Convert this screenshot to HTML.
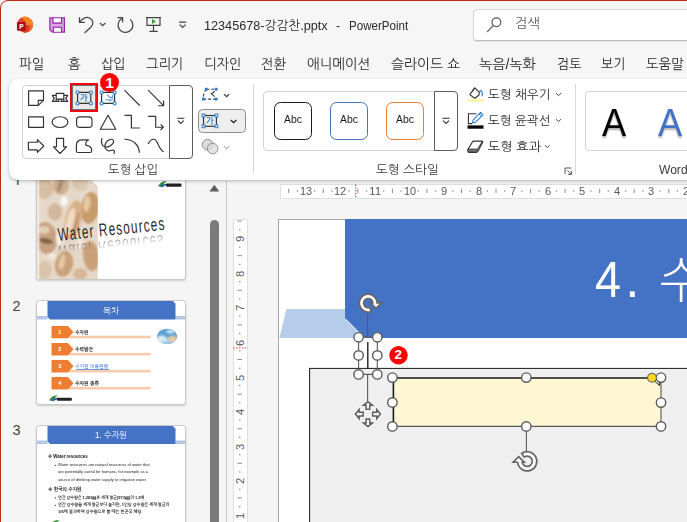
<!DOCTYPE html>
<html lang="ko"><head><meta charset="utf-8"><title>PowerPoint</title>
<style>
*{box-sizing:border-box;margin:0;padding:0}
html,body{width:687px;height:522px;overflow:hidden;background:#f0f0f0}
body{font-family:"Liberation Sans","NanumGothic","Noto Sans CJK KR",sans-serif;color:#222;position:relative}
#win{position:absolute;left:0;top:0;width:720px;height:560px;background:#f6f6f6;border:1px solid #c22a0c;border-radius:8px 0 0 0;overflow:hidden}
#app{position:absolute;left:-1px;top:-1px;width:687px;height:522px}
.t{position:absolute;white-space:nowrap;line-height:1;transform-origin:0 0;display:inline-block}
.tab{font-size:14px;color:#2b2b2b;top:57px}
.lbl{font-size:12.5px;color:#3a3a3a}
.cmd{font-size:12.5px;color:#2b2b2b}
svg{position:absolute;overflow:visible}
.b{position:absolute}
</style></head><body>
<div id="win"><div id="app">

<!-- ===== EDITOR AREA ===== -->
<div class="b" id="editor" style="left:228px;top:178px;width:460px;height:345px;background:#f5f5f5"></div>
<!-- rulers -->
<div class="b" style="left:279.5px;top:184.2px;width:420px;height:14.6px;background:#fff;border:1px solid #e0e0e0"></div>
<div class="b" style="left:232.8px;top:219.4px;width:15.2px;height:320px;background:#fff;border:1px solid #e0e0e0"></div>
<svg style="left:228px;top:178px" width="460" height="345" viewBox="228 178 460 345" fill="none">
<path d="M288.7 188.8 V193 M323.3 188.8 V193 M357.8 188.8 V193 M392.4 188.8 V193 M426.9 188.8 V193 M461.5 188.8 V193 M496.0 188.8 V193 M530.6 188.8 V193 M565.1 188.8 V193 M599.7 188.8 V193 M634.2 188.8 V193 M668.8 188.8 V193" stroke="#8a8a8a" stroke-width="1"/>
<g fill="#777"><rect x="296.8" y="190.4" width="1.2" height="1.2"/><rect x="314.0" y="190.4" width="1.2" height="1.2"/><rect x="331.3" y="190.4" width="1.2" height="1.2"/><rect x="348.6" y="190.4" width="1.2" height="1.2"/><rect x="365.9" y="190.4" width="1.2" height="1.2"/><rect x="383.1" y="190.4" width="1.2" height="1.2"/><rect x="400.4" y="190.4" width="1.2" height="1.2"/><rect x="417.7" y="190.4" width="1.2" height="1.2"/><rect x="435.0" y="190.4" width="1.2" height="1.2"/><rect x="452.2" y="190.4" width="1.2" height="1.2"/><rect x="469.5" y="190.4" width="1.2" height="1.2"/><rect x="486.8" y="190.4" width="1.2" height="1.2"/><rect x="504.1" y="190.4" width="1.2" height="1.2"/><rect x="521.3" y="190.4" width="1.2" height="1.2"/><rect x="538.6" y="190.4" width="1.2" height="1.2"/><rect x="555.9" y="190.4" width="1.2" height="1.2"/><rect x="573.2" y="190.4" width="1.2" height="1.2"/><rect x="590.4" y="190.4" width="1.2" height="1.2"/><rect x="607.7" y="190.4" width="1.2" height="1.2"/><rect x="625.0" y="190.4" width="1.2" height="1.2"/><rect x="642.3" y="190.4" width="1.2" height="1.2"/><rect x="659.5" y="190.4" width="1.2" height="1.2"/><rect x="676.8" y="190.4" width="1.2" height="1.2"/><rect x="694.1" y="190.4" width="1.2" height="1.2"/></g>
<path d="M355.7 184.6 V198.4" stroke="#e03a2c" stroke-width="1.1" stroke-dasharray="1.4 1.4"/>
<path d="M237.4 221.1 H241.8 M237.4 255.7 H241.8 M237.4 290.3 H241.8 M237.4 324.9 H241.8 M237.4 359.5 H241.8 M237.4 394.1 H241.8 M237.4 428.7 H241.8 M237.4 463.3 H241.8 M237.4 497.9 H241.8" stroke="#8a8a8a" stroke-width="1"/>
<g fill="#777"><rect x="239.2" y="229.2" width="1.2" height="1.2"/><rect x="239.2" y="246.5" width="1.2" height="1.2"/><rect x="239.2" y="263.8" width="1.2" height="1.2"/><rect x="239.2" y="281.0" width="1.2" height="1.2"/><rect x="239.2" y="298.4" width="1.2" height="1.2"/><rect x="239.2" y="315.6" width="1.2" height="1.2"/><rect x="239.2" y="333.0" width="1.2" height="1.2"/><rect x="239.2" y="350.2" width="1.2" height="1.2"/><rect x="239.2" y="367.6" width="1.2" height="1.2"/><rect x="239.2" y="384.8" width="1.2" height="1.2"/><rect x="239.2" y="402.1" width="1.2" height="1.2"/><rect x="239.2" y="419.4" width="1.2" height="1.2"/><rect x="239.2" y="436.8" width="1.2" height="1.2"/><rect x="239.2" y="454.0" width="1.2" height="1.2"/><rect x="239.2" y="471.4" width="1.2" height="1.2"/><rect x="239.2" y="488.6" width="1.2" height="1.2"/><rect x="239.2" y="506.0" width="1.2" height="1.2"/><rect x="239.2" y="523.2" width="1.2" height="1.2"/></g>
<path d="M233.4 348 H247.6" stroke="#e03a2c" stroke-width="1.1" stroke-dasharray="1.4 1.4"/>
</svg>
<span class="t" style="left:299.9px;top:186.2px;font-size:11.3px;color:#595959;transform:var(--pre,) scaleX(0.9699)">13</span>
<span class="t" style="left:334.4px;top:186.2px;font-size:11.3px;color:#595959;transform:var(--pre,) scaleX(0.9699)">12</span>
<span class="t" style="left:369.0px;top:186.2px;font-size:11.3px;color:#595959;transform:var(--pre,) scaleX(1.0397)">11</span>
<span class="t" style="left:403.5px;top:186.2px;font-size:11.3px;color:#595959;transform:var(--pre,) scaleX(0.9699)">10</span>
<span class="t" style="left:441.1px;top:186.2px;font-size:11.3px;color:#595959;transform:var(--pre,) scaleX(0.9846)">9</span>
<span class="t" style="left:475.6px;top:186.2px;font-size:11.3px;color:#595959;transform:var(--pre,) scaleX(0.9846)">8</span>
<span class="t" style="left:510.2px;top:186.2px;font-size:11.3px;color:#595959;transform:var(--pre,) scaleX(0.9846)">7</span>
<span class="t" style="left:544.7px;top:186.2px;font-size:11.3px;color:#595959;transform:var(--pre,) scaleX(0.9846)">6</span>
<span class="t" style="left:579.3px;top:186.2px;font-size:11.3px;color:#595959;transform:var(--pre,) scaleX(0.9846)">5</span>
<span class="t" style="left:613.9px;top:186.2px;font-size:11.3px;color:#595959;transform:var(--pre,) scaleX(0.9846)">4</span>
<span class="t" style="left:648.4px;top:186.2px;font-size:11.3px;color:#595959;transform:var(--pre,) scaleX(0.9846)">3</span>
<span class="t" style="left:682.9px;top:186.2px;font-size:11.3px;color:#595959;transform:var(--pre,) scaleX(0.9846)">2</span>
<span class="t" style="left:235.2px;top:242.2px;font-size:11.3px;color:#595959;transform:var(--pre,) scaleX(0.9846);--pre:rotate(-90deg)">9</span>
<span class="t" style="left:235.2px;top:276.8px;font-size:11.3px;color:#595959;transform:var(--pre,) scaleX(0.9846);--pre:rotate(-90deg)">8</span>
<span class="t" style="left:235.2px;top:311.4px;font-size:11.3px;color:#595959;transform:var(--pre,) scaleX(0.9846);--pre:rotate(-90deg)">7</span>
<span class="t" style="left:235.2px;top:346.0px;font-size:11.3px;color:#595959;transform:var(--pre,) scaleX(0.9846);--pre:rotate(-90deg)">6</span>
<span class="t" style="left:235.2px;top:380.6px;font-size:11.3px;color:#595959;transform:var(--pre,) scaleX(0.9846);--pre:rotate(-90deg)">5</span>
<span class="t" style="left:235.2px;top:415.2px;font-size:11.3px;color:#595959;transform:var(--pre,) scaleX(0.9846);--pre:rotate(-90deg)">4</span>
<span class="t" style="left:235.2px;top:449.8px;font-size:11.3px;color:#595959;transform:var(--pre,) scaleX(0.9846);--pre:rotate(-90deg)">3</span>
<span class="t" style="left:235.2px;top:484.4px;font-size:11.3px;color:#595959;transform:var(--pre,) scaleX(0.9846);--pre:rotate(-90deg)">2</span>
<span class="t" style="left:235.2px;top:519.0px;font-size:11.3px;color:#595959;transform:var(--pre,) scaleX(0.9846);--pre:rotate(-90deg)">1</span>
<!-- slide -->
<div class="b" style="left:278px;top:219px;width:420px;height:320px;background:#fff;border:1px solid #a8a8a8"></div>
<svg style="left:278px;top:219px" width="410" height="304" viewBox="278 219 410 304">
 <path d="M286.4 309 H346 V320 L364 338 H279.4 Z" fill="#b5cde8"/>
 <path d="M345 219 H690 V338 H365 L345 318 Z" fill="#4472c4"/>
 <rect x="309.6" y="368.4" width="400" height="170" fill="#efefef" stroke="#1a1a1a" stroke-width="1"/>
 <!-- yellow box -->
 <path d="M393.4 378 H655.5 L661 383.5 V426.4 H393.4 Z" fill="#fff7d4"/>
 <path d="M393.4 426.4 V378 H655.5" fill="none" stroke="#1a1a1a" stroke-width="1.6"/>
 <path d="M655.5 378 L661 383.5 V426.4 H393.4" fill="none" stroke="#5a5a5a" stroke-width="1.1"/>
 <!-- small selection -->
 <path d="M358.6 337.3 H377.3 V374.4 H358.6 Z" fill="none" stroke="#5a5a5a" stroke-width="1.1"/>
 <path d="M367.6 313 V338" stroke="#5a5a5a" stroke-width="1.1"/>
 <path d="M367.8 342 V368.4" stroke="#111" stroke-width="1.3"/>
 <path d="M367.6 374.5 V401" stroke="#5a5a5a" stroke-width="1.1"/>
 <path d="M526.4 431 V451.4" stroke="#5a5a5a" stroke-width="1.1"/>
 <g fill="#fff" stroke="#5a5a5a" stroke-width="1.4">
  <circle cx="358.6" cy="337.3" r="4.7"/><circle cx="377.3" cy="337.3" r="4.7"/>
  <circle cx="358.6" cy="355.4" r="4.7"/><circle cx="377.3" cy="355.4" r="4.7"/>
  <circle cx="358.6" cy="374.4" r="4.7"/><circle cx="377.3" cy="374.4" r="4.7"/>
  <circle cx="392.4" cy="377.6" r="4.7"/><circle cx="526.3" cy="377.6" r="4.7"/><circle cx="661" cy="377.6" r="4.7"/>
  <circle cx="392.4" cy="402.4" r="4.7"/><circle cx="661" cy="402.6" r="4.7"/>
  <circle cx="392.4" cy="426.4" r="4.7"/><circle cx="526.3" cy="426.4" r="4.7"/><circle cx="661" cy="426.4" r="4.7"/>
 </g>
 <circle cx="652" cy="377.8" r="4.4" fill="#ffd91a" stroke="#6a6a6a" stroke-width="1.2"/>
 <path d="M655 381.4 L659.6 385.6 L659.2 382.4" fill="none" stroke="#222" stroke-width="1"/>
 <!-- rotate top -->
 <g transform="translate(368.2 303.1)">
  <path d="M3.04 8.36 A8.9 8.9 0 1 1 8.9 -0.3 L13.4 -0.3 L7.85 5.2 L2.3 -0.3 L4.6 -0.3 A4.6 4.6 0 1 0 1.57 4.32 Z" fill="#fff" stroke="#666" stroke-width="1.7" stroke-linejoin="miter"/>
 </g>
 <!-- rotate bottom -->
 <g transform="translate(527.2 461.3)">
  <path d="M-5.5 -7.86 A9.6 9.6 0 1 1 -9.55 0.95 L-14 0.95 L-8.5 -4.6 L-3 0.95 L-5.01 0.95 A5.1 5.1 0 1 0 -2.92 -4.18 Z" fill="#fff" stroke="#666" stroke-width="1.7" stroke-linejoin="miter"/>
 </g>
 <!-- move cursor -->
 <g transform="translate(367.9 414.1)" fill="#fafafa" stroke="#5c5c5c" stroke-width="1.5" stroke-linejoin="miter">
  <path d="M0 -12.5 L4.5 -8.8 H1.8 V-4.8 H-1.8 V-8.8 H-4.5 Z"/>
  <path d="M0 12.5 L4.5 8.8 H1.8 V4.8 H-1.8 V8.8 H-4.5 Z"/>
  <path d="M-12.5 0 L-8.8 -4.5 V-1.8 H-4.8 V1.8 H-8.8 V4.5 Z"/>
  <path d="M12.5 0 L8.8 -4.5 V-1.8 H4.8 V1.8 H8.8 V4.5 Z"/>
 </g>
 <circle cx="398.5" cy="355.3" r="9.2" fill="#ff0000"/>
</svg>
<span class="t" style="left:394.6px;top:348.2px;font-size:13.5px;font-weight:bold;color:#fff;font-family:'Liberation Sans',sans-serif">2</span>
<span class="t" style="left:594.6px;top:255px;font-size:50.4px;color:#fff;transform:var(--pre,) scaleX(0.9275)">4</span>
<span class="t" style="left:625.2px;top:254.4px;font-size:51px;color:#fff">.</span>
<span class="t" style="left:658.4px;top:255.6px;font-size:49.5px;font-weight:300;color:#fff;font-family:'Liberation Sans','Noto Sans CJK KR',sans-serif">수</span>


<!-- ===== SLIDE PANEL ===== -->
<div class="b" id="panel" style="left:2px;top:170px;width:225px;height:352px;background:#f5f5f5"></div>
<div class="b" style="left:226px;top:181px;width:1px;height:345px;background:#cacaca"></div>
<!-- slide numbers -->
<div class="b" style="left:10px;top:170px;width:14px;height:15px;overflow:hidden"><span class="t" style="left:3.6px;top:4.6px;font-size:14.5px;color:#444">1</span></div>
<span class="t" style="left:12.6px;top:298.6px;font-size:14.5px;color:#444">2</span>
<span class="t" style="left:12.6px;top:423.2px;font-size:14.5px;color:#444">3</span>
<!-- thumb 1 -->
<div class="b" style="left:36px;top:160px;width:149.5px;height:119.5px;background:#fff;border:1px solid #c9c9c9;border-radius:3px;box-shadow:0 1px 2px rgba(0,0,0,.18);overflow:hidden">
<svg style="left:0;top:-1px" width="62" height="120" viewBox="37 160 62 120">
 <defs><filter id="bl" x="-20%" y="-20%" width="140%" height="140%"><feGaussianBlur stdDeviation="1.3"/></filter>
 <clipPath id="cp"><path d="M37 160 H91 V179.8 L97.8 186.5 V280 H37 Z"/></clipPath></defs>
 <g clip-path="url(#cp)">
 <rect x="37" y="160" width="62" height="120" fill="#e6d8c8"/>
 <g filter="url(#bl)">
  <ellipse cx="44" cy="188" rx="9" ry="11" fill="#d6bda3" transform="rotate(-15 44 188)"/>
  <ellipse cx="61" cy="186" rx="8" ry="9" fill="#cdb094"/>
  <ellipse cx="60" cy="186" rx="2" ry="7" fill="#a98a6e" transform="rotate(20 60 186)"/>
  <ellipse cx="80" cy="184" rx="8" ry="7" fill="#dcc7b0"/>
  <ellipse cx="90" cy="208" rx="9" ry="16" fill="#c79b6b" transform="rotate(8 90 208)"/>
  <ellipse cx="87" cy="204" rx="3.4" ry="8" fill="#e6c9a4" transform="rotate(8 87 204)"/>
  <ellipse cx="73" cy="220" rx="8" ry="20" fill="#d9b088" transform="rotate(14 73 220)"/>
  <ellipse cx="70" cy="222" rx="3.6" ry="15" fill="#f0dcc2" transform="rotate(14 70 222)"/>
  <ellipse cx="76" cy="224" rx="1.2" ry="13" fill="#b88d62" transform="rotate(14 76 224)"/>
  <ellipse cx="55" cy="212" rx="7" ry="9" fill="#d3b79c"/>
  <ellipse cx="46" cy="238" rx="11" ry="16" fill="#c6a280" transform="rotate(-8 46 238)"/>
  <ellipse cx="46" cy="241" rx="7" ry="2.6" fill="#7f5d42" transform="rotate(12 46 241)"/>
  <ellipse cx="44" cy="230" rx="6" ry="4" fill="#e1cdb8"/>
  <ellipse cx="64" cy="264" rx="9" ry="13" fill="#c9a17a" transform="rotate(12 64 264)"/>
  <ellipse cx="62" cy="262" rx="3" ry="8" fill="#e3c7a6" transform="rotate(12 62 262)"/>
  <ellipse cx="91" cy="256" rx="8" ry="15" fill="#caa27a" transform="rotate(-6 91 256)"/>
  <ellipse cx="44" cy="270" rx="8" ry="9" fill="#d9c3ab"/>
  <ellipse cx="80" cy="274" rx="7" ry="6" fill="#d6b896"/>
  <ellipse cx="64" cy="201" rx="3.4" ry="5" fill="#fbf7f2"/>
  <ellipse cx="59" cy="238" rx="3" ry="7" fill="#f6efe6"/>
  <ellipse cx="80" cy="244" rx="3" ry="5" fill="#f3eadf"/>
  <ellipse cx="52" cy="256" rx="4" ry="3" fill="#f3eadf"/>
  <rect x="36" y="160" width="3" height="120" fill="#f4eee8"/>
 </g>
 </g></g>
</svg>
<!-- logo -->
<svg style="left:120px;top:18px" width="26" height="9" viewBox="157 178 26 9">
 <path d="M158 185.5 C160 181 164 179.5 167 180.5 C165 181.5 163 183 161.5 185.8 Z" fill="#3a8f3a"/>
 <path d="M160 185.8 C162 183 166 182 169 183.5 C166 184 164 185 162.5 186.2 Z" fill="#2a5fa8"/>
 <rect x="166" y="182.6" width="15.5" height="3.2" rx="1" fill="#222"/>
</svg>
</div>
<span class="t" style="left:57px;top:225.6px;font-size:18.4px;letter-spacing:1.8px;color:#2a2a2a;transform:var(--pre,) scaleX(0.6414);--pre:rotate(-6deg)">Water Resources</span>
<span class="t" style="left:58px;top:261px;font-size:18.4px;letter-spacing:1.8px;color:#2a2a2a;opacity:.4;-webkit-mask-image:linear-gradient(to top,rgba(0,0,0,.9) 25%,rgba(0,0,0,0) 62%);mask-image:linear-gradient(to top,rgba(0,0,0,.9) 25%,rgba(0,0,0,0) 62%);transform:var(--pre,) scaleX(0.6414);--pre:rotate(-6deg) scaleY(-1)">Water Resources</span>

<!-- thumb 2 -->
<div class="b" style="left:36px;top:300px;width:149.5px;height:104.5px;background:#fff;border:1px solid #c9c9c9;border-radius:3.5px;box-shadow:0 1px 2px rgba(0,0,0,.18);overflow:hidden">
<svg style="left:-.5px;top:-.5px" width="149" height="104" viewBox="36.5 300.5 149 104">
 <path d="M36.5 315.4 H47 V319 H36.5 Z M175 315.4 H186 V319 H175 Z" fill="#b4c7e7"/>
 <path d="M47 300.5 H172.4 L175 303.2 V319 H49.6 L47 316.4 Z" fill="#4472c4"/>
 <g fill="#f8cbad"><rect x="68" y="335.2" width="82" height="2.6"/><rect x="68" y="352.4" width="82" height="2.6"/><rect x="68" y="369.4" width="82" height="2.6"/><rect x="68" y="386.4" width="82" height="2.6"/></g>
 <g fill="#ed7d31"><path d="M51 325.4 H67.4 L73 331.6 L67.4 337.8 H51 Z"/><path d="M51 342.4 H67.4 L73 348.7 L67.4 355 H51 Z"/><path d="M51 359.4 H67.4 L73 365.7 L67.4 372 H51 Z"/><path d="M51 376.4 H67.4 L73 382.7 L67.4 389 H51 Z"/></g>
 <path d="M75.6 369 H108.6" stroke="#1155cc" stroke-width=".6"/>
 <!-- picture -->
 <defs><clipPath id="cp2"><ellipse cx="166.6" cy="335.8" rx="10.2" ry="7.6"/></clipPath><filter id="bl2"><feGaussianBlur stdDeviation=".8"/></filter></defs>
 <g clip-path="url(#cp2)"><rect x="156" y="327" width="22" height="18" fill="#5ba3d6"/>
  <g filter="url(#bl2)"><ellipse cx="161" cy="340" rx="6" ry="5" fill="#d7ecf7"/><ellipse cx="172" cy="339" rx="5" ry="4" fill="#e6c9a3"/><ellipse cx="170" cy="331" rx="4" ry="1.6" fill="#e8f3fa"/><ellipse cx="167" cy="343" rx="8" ry="2.4" fill="#9fc7e4"/></g></g>
 <!-- logo -->
 <path d="M48.6 400 C50.5 395.6 54.4 394.2 57.4 395.2 C55.4 396.2 53.4 397.6 52 400.3 Z" fill="#3a8f3a"/>
 <path d="M50.5 400.3 C52.5 397.6 56.4 396.6 59.4 398 C56.4 398.6 54.4 399.6 53 400.8 Z" fill="#2a5fa8"/>
 <rect x="56.4" y="397.2" width="15" height="3.1" rx="1" fill="#222"/>
</svg>
</div>
<span class="t" style="left:103px;top:306.8px;font-size:9px;color:#fff;transform:var(--pre,) scaleX(0.9455)">목차</span>
<span class="t" style="left:58.2px;top:330px;font-size:5.5px;font-weight:bold;color:#fff">1</span>
<span class="t" style="left:58.2px;top:347px;font-size:5.5px;font-weight:bold;color:#fff">2</span>
<span class="t" style="left:58.2px;top:364px;font-size:5.5px;font-weight:bold;color:#fff">3</span>
<span class="t" style="left:58.2px;top:381px;font-size:5.5px;font-weight:bold;color:#fff">4</span>
<span class="t" style="left:75.4px;top:329.8px;font-size:5px;font-weight:bold;color:#111;transform:var(--pre,) scaleX(0.9497)">수자원</span>
<span class="t" style="left:75.4px;top:346.8px;font-size:5px;font-weight:bold;color:#111;transform:var(--pre,) scaleX(0.9568)">수력발전</span>
<span class="t" style="left:75.4px;top:363.8px;font-size:5px;color:#1155cc;transform:var(--pre,) scaleX(0.9680)">수자원 이용현황</span>
<span class="t" style="left:75.4px;top:380.8px;font-size:5px;font-weight:bold;color:#111;transform:var(--pre,) scaleX(0.9642)">수자원 종류</span>

<!-- thumb 3 -->
<div class="b" style="left:36px;top:425px;width:149.5px;height:110px;background:#fff;border:1px solid #c9c9c9;border-radius:3.5px;box-shadow:0 1px 2px rgba(0,0,0,.18);overflow:hidden">
<svg style="left:-.5px;top:-.5px" width="149" height="104" viewBox="36.5 425.5 149 104">
 <path d="M36.5 440 H47 V443.4 H36.5 Z M175 440 H186 V443.4 H175 Z" fill="#b4c7e7"/>
 <path d="M47 425.5 H172.4 L175 428.2 V443.4 H49.6 L47 440.8 Z" fill="#4472c4"/>
 <circle cx="55" cy="464.8" r=".6" fill="#222"/><circle cx="55" cy="497.4" r=".6" fill="#222"/><circle cx="55" cy="504.8" r=".6" fill="#222"/>
 <path d="M50 524.5 C52 520 56 519 59 520 C57 521 55 522.4 53.6 525 Z" fill="#3a8f3a"/>
 <path d="M52 525 C54 522.4 58 521.4 61 522.8 C58 523.4 56 524.4 54.6 525.6 Z" fill="#2a5fa8"/>
</svg>
</div>
<span class="t" style="left:95px;top:430.8px;font-size:9px;color:#fff;transform:var(--pre,) scaleX(0.9042)">1. 수자원</span>
<span class="t" style="left:48.2px;top:454.2px;font-size:5.2px;font-weight:bold;color:#111;transform:var(--pre,) scaleX(0.8465)">❖ Water resources</span>
<span class="t" style="left:58.4px;top:463.2px;font-size:4.4px;color:#222;transform:var(--pre,) scaleX(0.9147)">Water resources are natural resources of water that</span>
<span class="t" style="left:58.4px;top:470.4px;font-size:4.4px;color:#222;transform:var(--pre,) scaleX(0.9150)">are potentially useful for humans, for example as a</span>
<span class="t" style="left:58.4px;top:477.6px;font-size:4.4px;color:#222;transform:var(--pre,) scaleX(0.9198)">source of drinking water supply or irrigation water</span>
<span class="t" style="left:48.2px;top:486.8px;font-size:5.2px;font-weight:bold;color:#111;transform:var(--pre,) scaleX(0.9046)">❖ 한국의 수자원</span>
<span class="t" style="left:58.4px;top:495.6px;font-size:4.2px;font-weight:bold;color:#222;transform:var(--pre,) scaleX(0.9426)">연간 강수량은 1,283㎜로 세계 평균(973㎜)의 1.3배</span>
<span class="t" style="left:58.4px;top:503px;font-size:4.2px;font-weight:bold;color:#222;transform:var(--pre,) scaleX(0.9665)">연간 강수량을 세계 평균보다 높지만, 1인당 강수량은 세계 평균의</span>
<span class="t" style="left:58.4px;top:510px;font-size:4.2px;font-weight:bold;color:#222;transform:var(--pre,) scaleX(0.9969)">1/6에 불과하여 강수량으로 볼 때는 빈곤국 해당</span>

<!-- scrollbar -->
<svg style="left:208px;top:183px" width="13" height="10" viewBox="208 183 13 10"><path d="M209.4 191.4 L214.3 184.8 L219.2 191.4 Z" fill="#5c5c5c"/></svg>
<div class="b" style="left:210.3px;top:220px;width:9px;height:320px;background:#7b7b7b;border-radius:4.5px"></div>


<!-- ===== TITLE BAR ===== -->
<svg style="left:16px;top:16px" width="18" height="18" viewBox="16 16 18 18">
 <circle cx="25" cy="24.7" r="8" fill="#e2492b"/>
 <path d="M21.62 17.45 A8 8 0 0 1 32.83 26.36 L29.6 25.6 L25.6 25.2 L25.2 20.4 Z" fill="#f6851f"/>
 <path d="M32.83 26.36 A8 8 0 0 1 23.61 32.58 L25.6 25.2 L29.6 25.6 Z" fill="#dc3d20"/>
 <path d="M32.83 26.36 A8 8 0 0 1 28.76 31.76 L29.6 25.6 Z" fill="#ea6a2c"/>
 <rect x="17" y="22" width="8.7" height="8.7" rx="1.2" fill="#a90f1e"/>
 <text x="21.5" y="28.8" font-size="6.6" font-weight="bold" fill="#fff" text-anchor="middle" font-family="Liberation Sans, sans-serif">P</text>
</svg>
<!-- save -->
<svg style="left:48px;top:16px" width="18" height="18" viewBox="48 16 18 18">
 <path d="M49.9 17.9 H64.4 V32.1 H52.3 L49.9 29.7 Z" fill="#d9a3e6" stroke="#9a22ad" stroke-width="1.2"/>
 <rect x="53.4" y="18.4" width="7.6" height="4.2" fill="#fff"/>
 <rect x="53.9" y="27.8" width="7.1" height="3.9" fill="#fff"/>
 <path d="M52.9 17.9 V23.1 H61.5 V17.9 M53.4 32.1 V27.3 H61.5 V32.1" fill="none" stroke="#9a22ad" stroke-width="1.1"/>
</svg>
<!-- undo -->
<svg style="left:76px;top:14px" width="32" height="22" viewBox="76 14 32 22">
 <path d="M79.5 17.3 V22.3 H84.8" fill="none" stroke="#444" stroke-width="1.25"/>
 <path d="M79.8 22 C82 18.5 86 16.5 89.5 18 C93.5 19.8 93.8 24 91 27 L85 32.5" fill="none" stroke="#444" stroke-width="1.25" stroke-linecap="round"/>
 <path d="M100 23 L102.7 25.6 L105.4 23" fill="none" stroke="#444" stroke-width="1.2"/>
</svg>
<!-- redo -->
<svg style="left:114px;top:14px" width="22" height="22" viewBox="114 14 22 22">
 <path d="M117.6 17.6 H122.6 V22.6" fill="none" stroke="#444" stroke-width="1.25"/>
 <path d="M121.8 18.6 A7.4 7.4 0 1 0 130.5 19.6" fill="none" stroke="#444" stroke-width="1.25" stroke-linecap="round"/>
</svg>
<!-- slideshow -->
<svg style="left:144px;top:14px" width="20" height="22" viewBox="144 14 20 22">
 <path d="M146 17.6 H161" fill="none" stroke="#444" stroke-width="1.2"/>
 <path d="M147 17.6 V25.4 H160 V17.6" fill="none" stroke="#444" stroke-width="1.2"/>
 <path d="M153.5 25.4 V31.3 M149.4 31.3 H157.7" fill="none" stroke="#444" stroke-width="1.2"/>
 <path d="M152 19 L156 21.5 L152 24 Z" fill="#3d9b3d"/>
</svg>
<!-- customize -->
<svg style="left:176px;top:18px" width="14" height="14" viewBox="176 18 14 14">
 <path d="M179 22.2 H186.2" fill="none" stroke="#444" stroke-width="1.2"/>
 <path d="M179.6 24.6 L182.6 27.5 L185.6 24.6" fill="none" stroke="#444" stroke-width="1.2"/>
</svg>
<span class="t" style="left:203.5px;top:19px;font-size:13px;color:#2b2b2b;transform:var(--pre,) scaleX(0.9739)">12345678-강감찬.pptx</span>
<span class="t" style="left:335.6px;top:19px;font-size:13px;color:#2b2b2b;transform:var(--pre,) scaleX(0.9209)">-</span>
<span class="t" style="left:348.5px;top:19px;font-size:13px;color:#2b2b2b;transform:var(--pre,) scaleX(0.8919)">PowerPoint</span>
<!-- search -->
<div class="b" style="left:473px;top:9px;width:230px;height:32px;background:#fff;border:1px solid #d6d6d6;border-bottom-color:#bdbdbd;border-radius:4px;box-shadow:0 1px 1px rgba(0,0,0,.08)"></div>
<svg style="left:484px;top:14px" width="22" height="22" viewBox="484 14 22 22">
 <circle cx="496.4" cy="22.3" r="4.4" fill="none" stroke="#555" stroke-width="1.2"/>
 <path d="M493.2 25.6 L487.4 31.6" stroke="#555" stroke-width="1.2" stroke-linecap="round"/>
</svg>
<span class="t" style="left:515px;top:17px;font-size:13.5px;color:#5c5c5c;transform:var(--pre,) scaleX(0.9689)">검색</span>


<!-- ===== TABS ===== -->
<span class="t tab" style="left:19px;transform:var(--pre,) scaleX(0.9609)">파일</span>
<span class="t tab" style="left:68.3px;transform:var(--pre,) scaleX(0.9642)">홈</span>
<span class="t tab" style="left:100.8px;transform:var(--pre,) scaleX(0.9344)">삽입</span>
<span class="t tab" style="left:145.7px;transform:var(--pre,) scaleX(0.9447)">그리기</span>
<span class="t tab" style="left:204.3px;transform:var(--pre,) scaleX(0.9472)">디자인</span>
<span class="t tab" style="left:261.3px;transform:var(--pre,) scaleX(0.9496)">전환</span>
<span class="t tab" style="left:306.7px;transform:var(--pre,) scaleX(0.9618)">애니메이션</span>
<span class="t tab" style="left:390.7px;transform:var(--pre,) scaleX(0.9899)">슬라이드 쇼</span>
<span class="t tab" style="left:479.3px;transform:var(--pre,) scaleX(1.0030)">녹음/녹화</span>
<span class="t tab" style="left:557px;transform:var(--pre,) scaleX(0.9344)">검토</span>
<span class="t tab" style="left:601.3px;transform:var(--pre,) scaleX(0.9268)">보기</span>
<span class="t tab" style="left:646.3px;transform:var(--pre,) scaleX(0.9548)">도움말</span>


<!-- ===== RIBBON ===== -->
<div class="b" id="ribbon" style="left:8.6px;top:79px;width:700px;height:101px;background:#fff;border-radius:9px;box-shadow:0 1px 2.5px rgba(0,0,0,.20),0 2px 5px rgba(0,0,0,.08)"></div>
<!-- shapes gallery -->
<div class="b" style="left:22px;top:85px;width:171px;height:74px;border:1px solid #cfcfcf;border-radius:4px;background:#fff"></div>
<div class="b" style="left:169px;top:85px;width:24px;height:74px;border:1px solid #5e5e5e;border-radius:0 4px 4px 0;background:#fff"></div>
<svg style="left:170px;top:110px" width="22" height="22" viewBox="170 110 22 22">
 <path d="M177.2 118.3 H184.4" fill="none" stroke="#333" stroke-width="1.1"/>
 <path d="M177.8 120.7 L180.8 123.5 L183.8 120.7" fill="none" stroke="#333" stroke-width="1.1"/>
</svg>
<!-- selected highlight -->
<div class="b" style="left:70px;top:83px;width:28px;height:29px;background:#e9e9e9;border:2px solid #f00510;box-shadow:inset 0 0 0 1px #707070"></div>
<svg style="left:22px;top:85px" width="148" height="74" viewBox="22 85 148 74" fill="none" stroke="#333" stroke-width="1.15" stroke-linejoin="round">
 <!-- row1 -->
 <path d="M28.6 90.9 H43.5 V100.3 L38.3 105.4 H28.6 Z"/>
 <path d="M43.5 100.3 H38.3 V105.4"/>
 <!-- banner -->
 <path d="M56.2 101.4 V93.3 H63.8 V101.4 M56.2 99.1 H63.8"/>
 <path d="M56.2 95.4 H52.3 L54.3 98.4 L52.3 101.4 H58.8 V99.1 M63.8 95.4 H67.7 L65.7 98.4 L67.7 101.4 H61.2 V99.1"/>
 <!-- textbox icon -->
 <rect x="77.6" y="92.4" width="13.2" height="11"/>
 <g fill="#fff" stroke="#2b7cd3" stroke-width="1">
  <rect x="76.2" y="91.0" width="2.8" height="2.8"/><rect x="89.4" y="91.0" width="2.8" height="2.8"/><rect x="76.2" y="102.0" width="2.8" height="2.8"/><rect x="89.4" y="102.0" width="2.8" height="2.8"/>
 </g>
 <rect x="101.6" y="92.4" width="13" height="11"/>
 <g fill="#fff" stroke="#2b7cd3" stroke-width="1">
  <rect x="100.2" y="91.0" width="2.8" height="2.8"/><rect x="113.2" y="91.0" width="2.8" height="2.8"/><rect x="100.2" y="102.0" width="2.8" height="2.8"/><rect x="113.2" y="102.0" width="2.8" height="2.8"/>
 </g>
 <path d="M124.4 90.2 L139.7 105.5"/>
 <path d="M148.1 90.2 L163.6 105.7 M163.6 100.4 V105.7 H158.3"/>
 <!-- row2 -->
 <rect x="28.6" y="116.8" width="14.9" height="10.6"/>
 <ellipse cx="60" cy="122.1" rx="7.9" ry="5.4"/>
 <rect x="76.6" y="116.8" width="15.4" height="10.6" rx="3.2"/>
 <path d="M108.1 115.2 L115.8 129.2 H100.3 Z"/>
 <path d="M124.4 115.4 H131.4 V128 H139.7"/>
 <path d="M148.1 116.4 H155.7 V127.2 H163.4 M160.6 124.4 L163.4 127.2 L160.6 130"/>
 <!-- row3 -->
 <path d="M28.4 142.2 H37.4 V139.6 L43.8 146 L37.4 152.4 V149.8 H28.4 Z"/>
 <path d="M56.5 138.3 H63.6 V146.8 H66.6 L60 153.5 L53.5 146.8 H56.5 Z"/>
 <path d="M76.4 151 V145.2 C76.4 141.6 79 139.8 82.2 139.8 H88.6 C86 141 84.6 144.2 86.6 145.4 C89.2 146 91.6 147 91.6 149.6 V151 Q91.6 152.5 90.1 152.5 H77.9 Q76.4 152.5 76.4 151 Z"/>
 <path d="M102 138.6 C100.5 142 102 146 105 147 C109 148 114.5 143.5 113.5 140.5 C112.5 138 107.5 139.5 105.5 143.5 C103.5 148 107 152 111 150.5 C113.5 149.5 115.5 150.5 114 153.5" stroke-linecap="round"/>
 <path d="M124.4 139.2 C133 139.4 139 144.5 139.4 152.8"/>
 <path d="M148.1 144 C150 140.5 152.5 138.5 154.8 139.6 C158 141.2 159 150 163.7 151.6"/>
</svg>
<span class="t" style="left:80.2px;top:93.6px;font-size:8.8px;font-weight:bold;color:#2b7cd3;transform:var(--pre,) scaleX(0.9177)">가</span>
<span class="t" style="left:112.6px;top:94.2px;font-size:8.8px;font-weight:bold;color:#2b7cd3;transform:var(--pre,) scaleX(0.9177);--pre:rotate(90deg)">가</span>
<!-- badge 1 -->
<div class="b" style="left:100px;top:72.8px;width:19px;height:19px;border-radius:50%;background:#ff0000"></div>
<span class="t" style="left:105.2px;top:74.8px;font-size:15.5px;font-weight:bold;color:#fff;font-family:'Liberation Sans',sans-serif">1</span>

<!-- right column -->
<svg style="left:200px;top:86px" width="34" height="18" viewBox="200 86 34 18" fill="none">
 <path d="M206.3 89.2 H216.2 M216.2 99.1 H203.4 M206.3 89.2 C204 92 203 96 203.4 99.1" stroke="#333" stroke-width="1.1" stroke-dasharray="3 2"/>
 <path d="M214.8 91.2 L211.4 93.8 L214.6 96.6" stroke="#333" stroke-width="1.1"/>
 <g fill="#2b7cd3"><rect x="204.9" y="87.8" width="2.8" height="2.8"/><rect x="214.8" y="87.8" width="2.8" height="2.8"/><rect x="202" y="97.7" width="2.8" height="2.8"/><rect x="214.8" y="97.7" width="2.8" height="2.8"/></g>
 <path d="M224 94.1 L226.6 96.7 L229.2 94.1" stroke="#333" stroke-width="1.2"/>
</svg>
<div class="b" style="left:198px;top:109px;width:48px;height:24px;background:#eeeeee;border:1px solid #8c8c8c;border-radius:4.5px"></div>
<svg style="left:200px;top:112px" width="40" height="18" viewBox="200 112 40 18" fill="none">
 <rect x="203.5" y="115.5" width="12.9" height="10.8" stroke="#333" stroke-width="1.15"/>
 <g fill="#fff" stroke="#2b7cd3" stroke-width="1">
  <rect x="202.1" y="114.1" width="2.8" height="2.8"/><rect x="215.0" y="114.1" width="2.8" height="2.8"/><rect x="202.1" y="124.9" width="2.8" height="2.8"/><rect x="215.0" y="124.9" width="2.8" height="2.8"/>
 </g>
 <path d="M230.8 120 L233.6 122.7 L236.4 120" stroke="#222" stroke-width="1.3"/>
</svg>
<span class="t" style="left:206px;top:116.6px;font-size:8.8px;font-weight:bold;color:#2b7cd3;transform:var(--pre,) scaleX(0.9177)">가</span>
<svg style="left:200px;top:136px" width="34" height="22" viewBox="200 136 34 22" fill="none">
 <circle cx="207.6" cy="144.7" r="5.3" fill="#dcdcdc" stroke="#8e8e8e" stroke-width="1"/>
 <circle cx="212.6" cy="148.5" r="5.3" fill="#dcdcdc" fill-opacity=".75" stroke="#8e8e8e" stroke-width="1"/>
 <path d="M224 146.2 L226.6 148.8 L229.2 146.2" stroke="#b0b0b0" stroke-width="1.1"/>
</svg>
<span class="t lbl" style="left:108px;top:164.2px;transform:var(--pre,) scaleX(0.9944)">도형 삽입</span>
<div class="b" style="left:253.2px;top:84px;width:1px;height:90px;background:#d9d9d9"></div>

<!-- style gallery -->
<div class="b" style="left:263px;top:91px;width:195px;height:60px;border:1px solid #d4d4d4;border-radius:4px;background:#fff"></div>
<div class="b" style="left:434px;top:91px;width:24px;height:60px;border:1px solid #5e5e5e;border-radius:0 4px 4px 0;background:#fff"></div>
<svg style="left:435px;top:110px" width="22" height="22" viewBox="435 110 22 22">
 <path d="M442.4 118.3 H449.6" fill="none" stroke="#333" stroke-width="1.1"/>
 <path d="M443 120.7 L446 123.5 L449 120.7" fill="none" stroke="#333" stroke-width="1.1"/>
</svg>
<div class="b" style="left:274px;top:102px;width:38px;height:38px;border:1.4px solid #1a1a1a;border-radius:6.5px;background:#fff"></div>
<div class="b" style="left:330px;top:102px;width:38px;height:38px;border:1.2px solid #4472c4;border-radius:6.5px;background:#fff"></div>
<div class="b" style="left:386px;top:102px;width:38px;height:38px;border:1.2px solid #ed7d31;border-radius:6.5px;background:#fff"></div>
<span class="t" style="left:284.3px;top:114px;font-size:11px;color:#1a1a1a;transform:var(--pre,) scaleX(0.9489)">Abc</span>
<span class="t" style="left:340.3px;top:114px;font-size:11px;color:#1a1a1a;transform:var(--pre,) scaleX(0.9489)">Abc</span>
<span class="t" style="left:396.3px;top:114px;font-size:11px;color:#1a1a1a;transform:var(--pre,) scaleX(0.9489)">Abc</span>
<span class="t lbl" style="left:375.5px;top:164.2px;transform:var(--pre,) scaleX(1.0091)">도형 스타일</span>
<!-- commands -->
<span class="t cmd" style="left:488px;top:89.3px;transform:var(--pre,) scaleX(1.0043)">도형 채우기</span>
<span class="t cmd" style="left:488px;top:115.3px;transform:var(--pre,) scaleX(1.0043)">도형 윤곽선</span>
<span class="t cmd" style="left:488px;top:141.3px;transform:var(--pre,) scaleX(1.0498)">도형 효과</span>
<svg style="left:466px;top:84px" width="100" height="72" viewBox="466 84 100 72" fill="none">
 <!-- fill bucket -->
 <rect x="467.5" y="99" width="16" height="3" fill="#fff2b0"/>
 <path d="M474.8 87.8 L479.3 92.4 L479 95 L474.8 98.2 L469.8 94.6 Z" stroke="#333" stroke-width="1.1" stroke-linejoin="round" fill="#fff"/>
 <path d="M472.2 91.2 L474.8 87.8" stroke="#333" stroke-width="1.1"/>
 <path d="M479.4 91.6 C481 89.6 482.6 90.6 482.3 96.2" stroke="#2b7cd3" stroke-width="1.2" fill="none"/>
 <!-- outline pen -->
 <rect x="467.5" y="125.4" width="16" height="3.3" fill="#000"/>
 <path d="M476.5 113.8 H468.4 V123.6 H472" stroke="#333" stroke-width="1.1"/>
 <path d="M480.6 112.4 L483 114.8 L475.6 122.2 L472.4 123 L473.2 119.8 Z" stroke="#2b7cd3" stroke-width="1.1" fill="#fff" stroke-linejoin="round"/>
 <path d="M479 114 L481.4 116.4" stroke="#2b7cd3" stroke-width="1"/>
 <!-- effect -->
 <path d="M467.8 149.8 L472.4 142 Q472.9 141.2 474 141.2 H481.6 Q483.2 141.2 482.4 142.8 L478.2 150.6 Q477.6 152.4 476 152.4 H469.4 Q467.6 152.4 467.8 149.8 Z" stroke="#333" stroke-width="1.2" stroke-linejoin="round" fill="#fff"/>
 <path d="M468.2 149 H477.6 L477.2 151.4 Q476.8 152 476 152 H469.4 Q468.2 152 468.2 150.6 Z" fill="#777" stroke="#333" stroke-width=".8"/>
 <path d="M477.8 148.8 L482 141.8" stroke="#333" stroke-width="1"/>
 <!-- carets -->
 <path d="M556 93.2 L558.5 95.6 L561 93.2" stroke="#444" stroke-width="1"/>
 <path d="M556 119.2 L558.5 121.6 L561 119.2" stroke="#444" stroke-width="1"/>
 <path d="M545 145.2 L547.3 147.6 L549.6 145.2" stroke="#444" stroke-width="1"/>
</svg>
<!-- dialog launcher -->
<svg style="left:563px;top:166px" width="10" height="10" viewBox="563 166 10 10" fill="none">
 <path d="M571.4 168 H565 V174" stroke="#555" stroke-width="1"/>
 <path d="M567.4 170.4 L571.2 174.2 M571.4 171 V174.4 H568" stroke="#555" stroke-width="1"/>
</svg>
<div class="b" style="left:575px;top:84px;width:1px;height:90px;background:#d9d9d9"></div>
<!-- wordart -->
<div class="b" style="left:585px;top:91px;width:120px;height:60px;border:1px solid #d4d4d4;border-radius:4px;background:#fff"></div>
<span class="t" style="left:601.8px;top:103.6px;font-size:38.5px;color:#000;text-shadow:0 1.5px 2px rgba(0,0,0,.35);transform:var(--pre,) scaleX(0.9421)">A</span>
<span class="t" style="left:658.4px;top:103.6px;font-size:38.5px;color:#4472c4;text-shadow:0 1.5px 2px rgba(0,0,0,.3);transform:var(--pre,) scaleX(0.9421)">A</span>
<span class="t lbl" style="left:658.7px;top:164.2px;transform:var(--pre,) scaleX(0.9644)">WordArt</span>


</div></div>
</body></html>
